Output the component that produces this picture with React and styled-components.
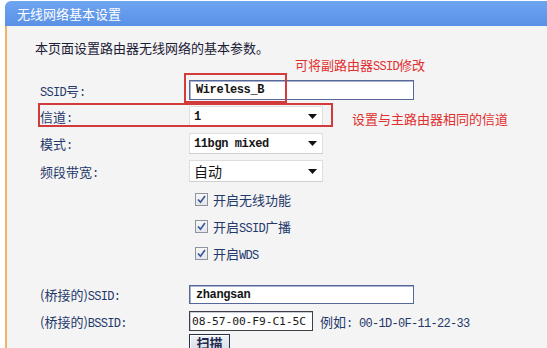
import React from "react";
import styled, { createGlobalStyle } from "styled-components";

const GlobalStyle = createGlobalStyle`
  html, body { margin: 0; padding: 0; background: #ffffff; }
  body {
    width: 547px; height: 348px; overflow: hidden;
    font-family: "Noto Sans CJK SC", "Liberation Sans", sans-serif;
  }
`;

const Page = styled.div`
  padding: 1px 0 0 5px;
  display: flex;
  flex-direction: column;
`;

const Header = styled.div`
  height: 25px;
  border-radius: 6px 0 0 0;
  background: linear-gradient(#6fa4f0, #5a91e6);
  color: #ffffff;
  font-size: 13px;
  display: flex;
  align-items: center;
  padding-left: 12px;
`;

const Panel = styled.div`
  position: relative;
  border-left: 2px solid #f2b266;
  background: #f4f4f4;
  min-height: 400px;
  padding-top: 14px;
  display: flex;
  flex-direction: column;
`;

const Intro = styled.p`
  margin: 0;
  padding-left: 28px;
  font-size: 13px;
  line-height: 16px;
  color: #1c2036;
`;

const Mono = styled.span`
  font-family: "Liberation Mono", "DejaVu Sans Mono", monospace;
  font-size: ${(p) => p.$size || 12}px;
  letter-spacing: ${(p) => (p.$ls !== undefined ? p.$ls : -0.7)}px;
  font-weight: ${(p) => (p.$bold ? 700 : 400)};
`;

const Row = styled.div`
  display: grid;
  grid-template-columns: 149px auto;
  align-items: center;
  padding-left: 33px;
  height: ${(p) => p.$h}px;
  margin-top: ${(p) => p.$mt}px;
`;

const Label = styled.div`
  font-size: 13px;
  color: #24396b;
  white-space: nowrap;
`;

const Field = styled.div`
  display: flex;
  align-items: center;
  gap: 7px;
  height: 100%;
`;

const TextBox = styled.div`
  box-sizing: border-box;
  width: ${(p) => p.$w}px;
  height: 100%;
  background: #ffffff;
  border: 1px solid ${(p) => p.$border || "#56689a"};
  box-shadow: inset 1px 1px 0 ${(p) => p.$inner || "#a7b0cc"};
  display: flex;
  align-items: center;
  padding-left: ${(p) => p.$pl || 6}px;
  color: #151515;
  white-space: nowrap;
  overflow: hidden;
`;

const MacText = styled.span`
  font-family: "DejaVu Sans Mono", "Liberation Mono", monospace;
  font-size: 11.3px;
  letter-spacing: -0.1px;
  color: #1a1a1a;
`;

const SelectBox = styled.div`
  box-sizing: border-box;
  width: 134px;
  height: 100%;
  background: #ffffff;
  border: 1px solid #dedede;
  border-bottom-color: #cfcfcf;
  display: flex;
  align-items: center;
  justify-content: space-between;
  padding: 0 5px 0 4px;
  color: #151515;
`;

const SelectText = styled.span`
  font-size: 14px;
  color: #151515;
`;

const Hint = styled.span`
  font-size: 13px;
  color: #24396b;
  white-space: nowrap;
`;

const CheckRow = styled.div`
  height: 27px;
  display: flex;
  align-items: center;
  gap: 5px;
  padding-left: 188px;
  margin-top: ${(p) => p.$mt || 0}px;
  font-size: 13px;
  color: #24396b;
`;

const CheckBox = styled.span`
  box-sizing: border-box;
  width: 13px;
  height: 13px;
  border: 1px solid #8e949e;
  background: linear-gradient(#f7f7f7, #e4e6ea);
  display: flex;
  align-items: center;
  justify-content: center;
`;

const ButtonRow = styled.div`
  padding-left: 182px;
  margin-top: 3px;
`;

const ScanButton = styled.button`
  box-sizing: border-box;
  width: 41px;
  height: 20px;
  border: 1px solid #26324e;
  box-shadow: inset 1px 1px 0 #ffffff;
  background: linear-gradient(#eef1f6, #d6dbe6);
  font-family: "Noto Sans CJK SC", sans-serif;
  font-size: 13px;
  font-weight: 700;
  color: #1d2a4c;
  padding: 0;
  line-height: 14px;
  display: flex;
  align-items: flex-start;
  justify-content: center;
  padding-top: 1px;
`;

const RedBox = styled.div`
  position: absolute;
  box-sizing: border-box;
  left: ${(p) => p.$x}px;
  top: ${(p) => p.$y}px;
  width: ${(p) => p.$w}px;
  height: ${(p) => p.$h}px;
  border: 2px solid #d23b3b;
  pointer-events: none;
`;

const Note = styled.div`
  position: absolute;
  left: ${(p) => p.$x}px;
  top: ${(p) => p.$y}px;
  font-size: 13px;
  line-height: 16px;
  color: #e0302f;
  white-space: nowrap;
`;

const Arrow = () => (
  <svg width="9" height="5" viewBox="0 0 9 5">
    <path d="M0 0 H9 L4.5 5 Z" fill="#111" />
  </svg>
);

const Check = () => (
  <svg width="9" height="9" viewBox="0 0 9 9">
    <path d="M1 4.5 L3.5 7.2 L8 1" fill="none" stroke="#3b5a9a" strokeWidth="1.7" />
  </svg>
);

export default function App() {
  return (
    <>
      <GlobalStyle />
      <Page>
        <Header>无线网络基本设置</Header>
        <Panel>
          <Intro>本页面设置路由器无线网络的基本参数。</Intro>

          <Row $h={20} $mt={24}>
            <Label>
              <Mono>SSID</Mono>号<Mono>:</Mono>
            </Label>
            <Field>
              <TextBox $w={225}>
                <Mono $size={12} $ls={-0.4} $bold>Wireless_B</Mono>
              </TextBox>
            </Field>
          </Row>

          <Row $h={21} $mt={6}>
            <Label>
              信道<Mono>:</Mono>
            </Label>
            <Field>
              <SelectBox>
                <Mono $size={12} $ls={-0.4} $bold>1</Mono>
                <Arrow />
              </SelectBox>
            </Field>
          </Row>

          <Row $h={21} $mt={6}>
            <Label>
              模式<Mono>:</Mono>
            </Label>
            <Field>
              <SelectBox>
                <Mono $size={12} $ls={-0.4} $bold>11bgn mixed</Mono>
                <Arrow />
              </SelectBox>
            </Field>
          </Row>

          <Row $h={22} $mt={6}>
            <Label>
              频段带宽<Mono>:</Mono>
            </Label>
            <Field>
              <SelectBox>
                <SelectText>自动</SelectText>
                <Arrow />
              </SelectBox>
            </Field>
          </Row>

          <CheckRow $mt={4}>
            <CheckBox><Check /></CheckBox>
            开启无线功能
          </CheckRow>
          <CheckRow>
            <CheckBox><Check /></CheckBox>
            <span>开启<Mono>SSID</Mono>广播</span>
          </CheckRow>
          <CheckRow>
            <CheckBox><Check /></CheckBox>
            <span>开启<Mono>WDS</Mono></span>
          </CheckRow>

          <Row $h={19} $mt={18}>
            <Label>
              (桥接的)<Mono>SSID:</Mono>
            </Label>
            <Field>
              <TextBox $w={225}>
                <Mono $size={12} $ls={-0.4} $bold>zhangsan</Mono>
              </TextBox>
            </Field>
          </Row>

          <Row $h={20} $mt={7}>
            <Label>
              (桥接的)<Mono>BSSID:</Mono>
            </Label>
            <Field>
              <TextBox $w={124} $pl={2} $border="#3c4048" $inner="#c8ccd4">
                <MacText>08-57-00-F9-C1-5C</MacText>
              </TextBox>
              <Hint>
                例如<Mono>: 00-1D-0F-11-22-33</Mono>
              </Hint>
            </Field>
          </Row>

          <ButtonRow>
            <ScanButton>扫描</ScanButton>
          </ButtonRow>

          <Note $x={288} $y={31}>
            可将副路由器<Mono>SSID</Mono>修改
          </Note>
          <RedBox $x={177} $y={47} $w={103} $h={30} />
          <RedBox $x={31} $y={77} $w={295} $h={24} />
          <Note $x={345} $y={85}>设置与主路由器相同的信道</Note>
        </Panel>
      </Page>
    </>
  );
}
